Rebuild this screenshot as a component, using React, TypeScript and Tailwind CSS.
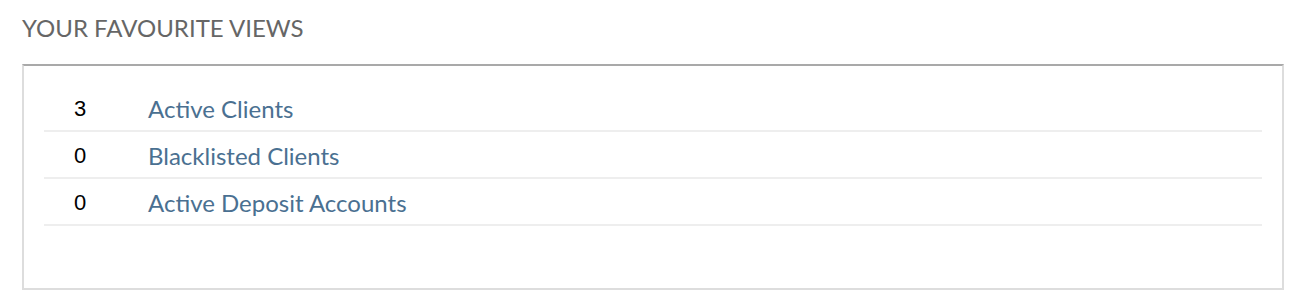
import React from "react";

const rows = [
  { n: "3", label: "Active Clients" },
  { n: "0", label: "Blacklisted Clients" },
  { n: "0", label: "Active Deposit Accounts" },
];

export default function App() {
  return (
    <div className="w-[1302px] h-[308px] bg-white pl-[22px] pr-[18px] pt-[13px]" style={{ fontFamily: "Lato, 'Noto Sans', sans-serif" }}>
      <h2 className="text-[24px] leading-[29px] text-[#666666]">YOUR FAVOURITE VIEWS</h2>
      <div className="mt-[22px] h-[226px] border-t-2 border-t-[#a9a9a9] border-x-2 border-b-2 border-x-[#dddddd] border-b-[#dddddd] px-[20px] pt-[19px]">
        {rows.map((r) => (
          <div key={r.label} className="flex items-center h-[47px] pt-[2px] border-b-2 border-[#eeeeee]">
            <div className="w-[104px] pl-[30px] text-[22px] leading-[26px] text-black" style={{ fontFamily: "'Liberation Sans', Arial, sans-serif" }}>{r.n}</div>
            <a className="text-[24px] text-[#4a7091]">{r.label}</a>
          </div>
        ))}
      </div>
    </div>
  );
}
